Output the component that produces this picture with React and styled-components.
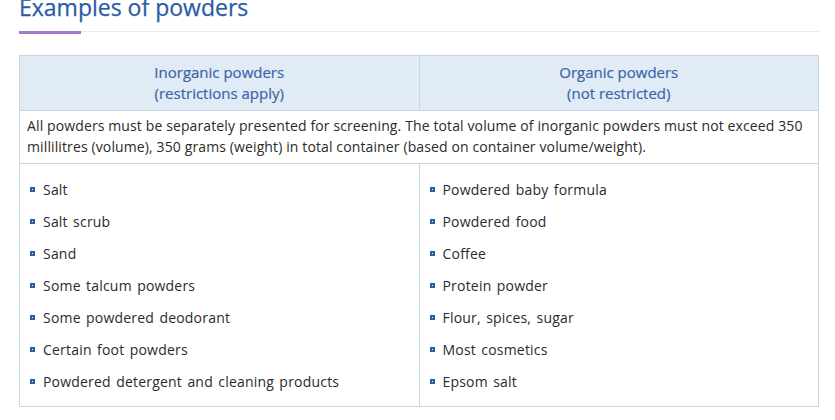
import React from "react";
import styled, { createGlobalStyle } from "styled-components";

const Global = createGlobalStyle`
  html, body { margin: 0; padding: 0; background: #fff; }
  body { font-family: "Open Sans", "Noto Sans", sans-serif; color: #333; }
`;

const Page = styled.div`
  width: 800px;
  padding: 0 0 0 19px;
`;

const Title = styled.h2`
  margin: 0;
  margin-top: -9px;
  font-size: 23px;
  font-weight: 400;
  line-height: 32px;
  color: #2a5ca8;
  -webkit-text-stroke: 0.25px #2a5ca8;
`;

const RuleRow = styled.div`
  display: flex;
  align-items: flex-start;
  margin-top: 8px;
  width: 801px;
`;

const Accent = styled.div`
  width: 62px;
  height: 3px;
  background: #a07bc8;
`;

const Rule = styled.div`
  flex: 1;
  height: 1px;
  background: #ececec;
`;

const Table = styled.table`
  margin-top: 21px;
  width: 800px;
  border-collapse: collapse;
  table-layout: fixed;
`;

const Th = styled.th`
  background: #e1ebf6;
  border: 1px solid #c9d7e4;
  color: #3a65a8;
  font-weight: 400;
  font-size: 15px;
  line-height: 21px;
  padding: 6px 8px 6px;
  text-align: center;
  -webkit-text-stroke: 0.2px #3a65a8;
`;

const Td = styled.td`
  border: 1px solid #c9d7e4;
  font-size: 14px;
  letter-spacing: 0.12px;
  line-height: 21px;
  padding: ${(p) => (p.$list ? "9px 8px 9px 8px" : "4px 3px 6px 7px")};
  vertical-align: top;
  color: #2b2b2b;
`;

const List = styled.ul`
  list-style: none;
  margin: 0;
  padding: 0;
`;

const Item = styled.li`
  display: flex;
  align-items: center;
  height: 32px;
  font-size: 14px;
  color: #2b2b2b;
  word-spacing: 1.5px;
  letter-spacing: 0.2px;
`;

const Bullet = styled.span`
  width: 1px;
  height: 1px;
  border: 2px solid #2b5aa0;
  background: #fff;
  margin: 0 8px 0 2px;
  flex: none;
`;

const inorganic = [
  "Salt",
  "Salt scrub",
  "Sand",
  "Some talcum powders",
  "Some powdered deodorant",
  "Certain foot powders",
  "Powdered detergent and cleaning products",
];

const organic = [
  "Powdered baby formula",
  "Powdered food",
  "Coffee",
  "Protein powder",
  "Flour, spices, sugar",
  "Most cosmetics",
  "Epsom salt",
];

const Items = ({ items }) => (
  <List>
    {items.map((t) => (
      <Item key={t}>
        <Bullet />
        {t}
      </Item>
    ))}
  </List>
);

export default function App() {
  return (
    <Page>
      <Global />
      <Title>Examples of powders</Title>
      <RuleRow>
        <Accent />
        <Rule />
      </RuleRow>
      <Table>
        <thead>
          <tr>
            <Th>
              Inorganic powders
              <br />
              (restrictions apply)
            </Th>
            <Th>
              Organic powders
              <br />
              (not restricted)
            </Th>
          </tr>
        </thead>
        <tbody>
          <tr>
            <Td colSpan={2}>
              All powders must be separately presented for screening. The total volume of
              inorganic powders must not exceed 350 millilitres (volume), 350 grams (weight) in
              total container (based on container volume/weight).
            </Td>
          </tr>
          <tr>
            <Td $list>
              <Items items={inorganic} />
            </Td>
            <Td $list>
              <Items items={organic} />
            </Td>
          </tr>
        </tbody>
      </Table>
    </Page>
  );
}
